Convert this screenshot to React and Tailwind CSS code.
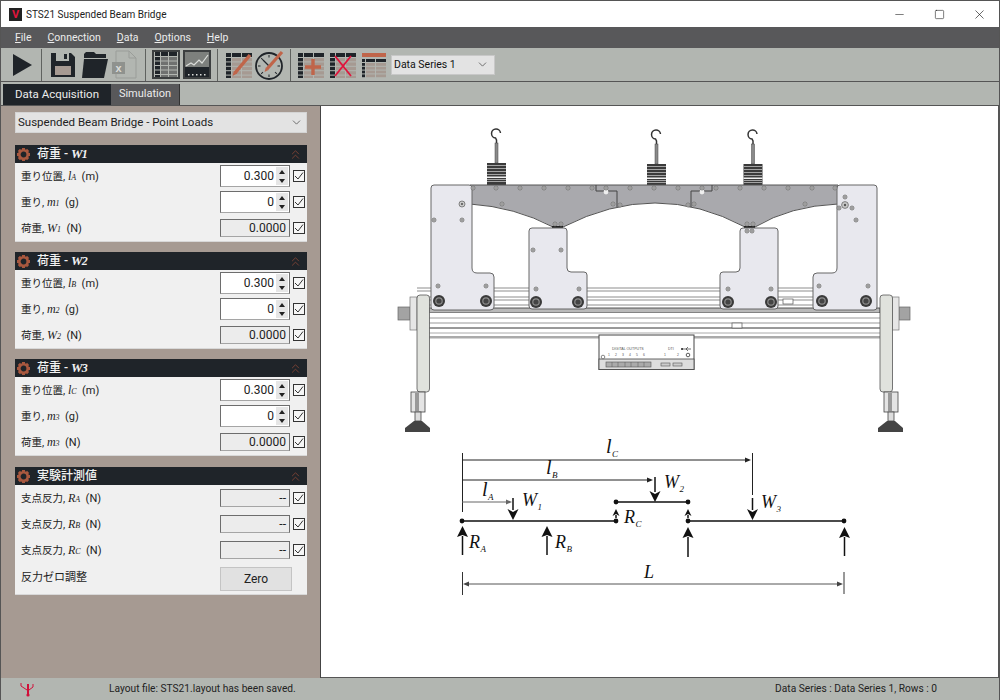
import { Minus, Square, X, ChevronDown, ChevronsUp } from 'lucide-react';

const SERIF = "[font-family:'Liberation_Serif',serif]";

// toolbar bitmap colours
const INK = '#1f2429';
const TAN = '#a69a92';
const RUST = '#c0654a';

function Sep() {
  return <div className="w-px h-[32px] bg-[#5f625f] shrink-0" />;
}

function Play() {
  return (
    <svg width="22" height="24" viewBox="0 0 22 24" className="shrink-0">
      <path d="M1 1 L20 12 L1 23 Z" fill={INK} />
    </svg>
  );
}

function Save() {
  return (
    <svg width="26" height="26" viewBox="0 0 26 26" className="shrink-0">
      <path d="M1 1 H21 L25 5 V25 H1 Z" fill={INK} />
      <rect x="6" y="1" width="13" height="8" fill="#b2b6b1" />
      <rect x="14" y="2" width="3" height="5" fill={INK} />
      <rect x="5" y="14" width="16" height="9" fill={TAN} />
    </svg>
  );
}

function Folder() {
  return (
    <svg width="28" height="28" viewBox="0 0 28 28" className="shrink-0">
      <path d="M3 3 L5 1 H13 L15 3 H25 V7 H3 Z" fill={INK} />
      <path d="M3 8 H27 L23 27 H1 Z" fill={INK} />
    </svg>
  );
}

function Excel() {
  return (
    <svg width="25" height="29" viewBox="0 0 25 29" className="shrink-0">
      <path d="M4 1 H17 L24 8 V28 H4 Z" fill="#b2b6b1" stroke="#9a9d99" />
      <path d="M17 1 V8 H24" fill="none" stroke="#9a9d99" />
      <rect x="0" y="12" width="13" height="12" fill="#8f928e" />
      <text x="6.5" y="22" textAnchor="middle" fontSize="11" fontWeight="700" fill="#d9dbd8" className="[font-family:'Liberation_Sans',sans-serif]">x</text>
    </svg>
  );
}

function SheetCells({ x = 0, y = 0 }) {
  const rows = [0, 1, 2, 3, 4];
  return (
    <g transform={`translate(${x} ${y})`}>
      <rect x="0" y="0" width="5" height="4" fill={INK} />
      <rect x="6" y="0" width="9" height="4" fill={INK} />
      <rect x="16" y="0" width="10" height="4" fill={INK} />
      {rows.map((r) => (
        <g key={r}>
          <rect x="0" y={5 + r * 4.4} width="5" height="3.4" fill={INK} />
          <rect x="6" y={5 + r * 4.4} width="9" height="3.4" fill={TAN} />
          <rect x="16" y={5 + r * 4.4} width="10" height="3.4" fill={TAN} />
        </g>
      ))}
    </g>
  );
}

function BoxedTable() {
  const rows = [5, 9.5, 14, 18.5, 23];
  return (
    <div className="w-[28px] h-[29px] border-2 border-[#3c3f40] bg-[#b2b6b1] flex items-center justify-center shrink-0">
      <svg width="24" height="25" viewBox="0 0 24 25">
        <rect x="1" y="0" width="5" height="4" fill={INK} />
        <rect x="7" y="0" width="7" height="4" fill={INK} />
        <rect x="15" y="0" width="8" height="4" fill={INK} />
        {rows.map((y) => (
          <g key={y}>
            <rect x="1" y={y} width="5" height="3.5" fill={INK} />
            <rect x="7" y={y} width="7" height="3.5" fill="#6f7170" />
            <rect x="15" y={y} width="8" height="3.5" fill="#6f7170" />
          </g>
        ))}
      </svg>
    </div>
  );
}

function BoxedChart() {
  const ticks = [3, 7, 11, 15, 19];
  return (
    <div className="w-[28px] h-[29px] border-2 border-[#3c3f40] bg-[#7d807d] flex items-center justify-center shrink-0">
      <svg width="24" height="25" viewBox="0 0 24 25">
        <path d="M1 14 L6 11 L9 13 L14 8 L17 11 L23 3" fill="none" stroke="#dcdedb" strokeWidth="1.2" />
        <rect x="0" y="15" width="24" height="10" fill={INK} />
        {ticks.map((x) => (
          <rect key={x} x={x} y="22" width="1.5" height="1.5" fill="#dcdedb" />
        ))}
      </svg>
    </div>
  );
}

function EditTable() {
  return (
    <svg width="26" height="26" viewBox="0 0 26 26" className="shrink-0">
      <SheetCells y="1" />
      <path d="M9 21 L24 3" stroke={RUST} strokeWidth="3.5" />
      <path d="M6.5 24 L8 19 L11 21.5 Z" fill={RUST} />
    </svg>
  );
}

function Gauge() {
  const marks = [0, 45, 90, 135, 180, 225, 270, 315];
  return (
    <svg width="30" height="30" viewBox="0 0 30 30" className="shrink-0">
      <circle cx="14" cy="16" r="13" fill="#b2b6b1" stroke={INK} strokeWidth="1.8" />
      {marks.map((a) => (
        <rect key={a} x="13.5" y="5" width="1" height="2.5" fill={INK} transform={`rotate(${a} 14 16)`} />
      ))}
      <path d="M14 16 L8 10" stroke={INK} strokeWidth="1.2" />
      <path d="M12 19 L27 2" stroke={RUST} strokeWidth="3.2" />
      <path d="M9.5 22 L10.8 17.5 L13.5 20 Z" fill={RUST} />
    </svg>
  );
}

function PlusTable() {
  return (
    <svg width="26" height="26" viewBox="0 0 26 26" className="shrink-0">
      <SheetCells y="1" />
      <path d="M7 15 H23 M15 7 V23" stroke={RUST} strokeWidth="3.4" />
    </svg>
  );
}

function CrossTable() {
  return (
    <svg width="26" height="26" viewBox="0 0 26 26" className="shrink-0">
      <SheetCells y="1" />
      <path d="M5 4 L21 24 M21 4 L5 24" stroke="#e0143c" strokeWidth="1.8" />
    </svg>
  );
}

function HeadTable() {
  const rows = [0, 1, 2, 3];
  return (
    <svg width="24" height="26" viewBox="0 0 24 26" className="shrink-0">
      <rect x="0" y="1" width="24" height="4" fill={RUST} />
      <g transform="translate(0 7)">
        <rect x="0" y="0" width="3" height="3" fill={INK} />
        <rect x="4" y="0" width="9" height="3" fill={INK} />
        <rect x="14" y="0" width="10" height="3" fill={INK} />
        {rows.map((r) => (
          <g key={r}>
            <rect x="0" y={4 + r * 3.8} width="3" height="2.8" fill={INK} />
            <rect x="4" y={4 + r * 3.8} width="9" height="2.8" fill={TAN} />
            <rect x="14" y={4 + r * 3.8} width="10" height="2.8" fill={TAN} />
          </g>
        ))}
      </g>
    </svg>
  );
}

function Gear() {
  const teeth = [0, 45, 90, 135, 180, 225, 270, 315];
  return (
    <svg width="13" height="13" viewBox="0 0 13 13" className="shrink-0">
      {teeth.map((a) => (
        <rect key={a} x="5" y="0" width="3" height="3" fill="#a8583f" transform={`rotate(${a} 6.5 6.5)`} />
      ))}
      <circle cx="6.5" cy="6.5" r="4.2" fill="none" stroke="#a8583f" strokeWidth="2.6" />
    </svg>
  );
}

function Check() {
  return (
    <div className="w-[12px] h-[12px] border border-[#333] bg-[#f6f6f6] flex items-center justify-center shrink-0">
      <svg width="10" height="10" viewBox="0 0 10 10">
        <path d="M1 5 L4 8 L9 1.5" fill="none" stroke="#333" strokeWidth="1" />
      </svg>
    </div>
  );
}

function Sym({ s, sub, bold }) {
  return (
    <span className={`${SERIF} italic ${bold ? 'font-bold text-[13px]' : 'text-[12px]'}`}>
      {s}
      <span className={bold ? 'text-[12px] ml-[-1px]' : 'text-[8px]'}>{sub}</span>
    </span>
  );
}

function Spin({ value }) {
  return (
    <div className="w-[70px] h-[22px] border border-[#6d6d6d] border-b-[#a5a5a5] bg-white flex items-center justify-end shrink-0">
      <span className="text-[12px] text-[#222] mr-[2px]">{value}</span>
      <div className="w-[12px] h-[18px] mr-[1px] bg-[#e6e6e6] flex flex-col items-center justify-around">
        <div className="w-0 h-0 border-x-[3px] border-x-transparent border-b-[4px] border-b-[#222]" />
        <div className="w-0 h-0 border-x-[3px] border-x-transparent border-t-[4px] border-t-[#222]" />
      </div>
    </div>
  );
}

function ReadOut({ value }) {
  return (
    <div className="w-[70px] h-[18px] border border-[#6d6d6d] border-b-[#a5a5a5] bg-[#ececec] flex items-center justify-end pr-[3px] shrink-0">
      <span className="text-[12px] text-[#222]">{value}</span>
    </div>
  );
}

function Row({ name, sym, sub, unit, spin, read }) {
  return (
    <div className="h-[26px] flex items-center pl-[6px] pr-[2px]">
      <div className="flex-1 text-[10.5px] text-[#222] whitespace-pre">
        {name}
        <span className="text-[11px]">
          , <Sym s={sym} sub={sub} />
          {'  '}({unit})
        </span>
      </div>
      {spin && <Spin value={spin} />}
      {read && <ReadOut value={read} />}
      <div className="w-[15px] flex justify-end">
        <Check />
      </div>
    </div>
  );
}

function Section({ title, sym, sub, gap, children }) {
  return (
    <div className={`${gap} bg-[#f0f0f0] border-b border-b-[#d8d8d8]`}>
      <div className="h-[18px] bg-[#1f2429] flex items-center pl-[2px] pr-[4px]">
        <Gear />
        <div className="ml-[7px] flex-1 text-[12px] font-medium text-[#f2f2f2] whitespace-pre">
          {title}
          {sym && (
            <>
              {' - '}
              <Sym s={sym} sub={sub} bold />
            </>
          )}
        </div>
        <ChevronsUp size={15} color="#8a4636" strokeWidth={1.3} />
      </div>
      {children}
    </div>
  );
}

function LoadSection({ n, pos, wRow, gap }) {
  return (
    <Section title="荷重" sym="W" sub={n} gap={gap}>
      <Row name="重り位置" sym="l" sub={pos} unit="m" spin="0.300" />
      <Row name="重り" sym="m" sub={n} unit="g" spin="0" />
      <Row name="荷重" sym={wRow} sub={n} unit="N" read="0.0000" />
    </Section>
  );
}

function Screw({ x, y, r = 2 }) {
  return (
    <g>
      <circle cx={x} cy={y} r={r} fill="#c9c9c9" stroke="#6c6c6c" strokeWidth="0.8" />
      <circle cx={x} cy={y} r={r * 0.35} fill="#555" />
    </g>
  );
}

function Pivot({ x, y }) {
  return (
    <g>
      <circle cx={x} cy={y} r="6" fill="#3a3a3a" />
      <circle cx={x} cy={y} r="3.8" fill="#8d8d8d" />
      <circle cx={x} cy={y} r="2.6" fill="#444" />
    </g>
  );
}

function Weight({ x, top }) {
  const bands = [2, 5, 8, 11, 16, 18];
  return (
    <g>
      <path d={`M${x + 4} ${top - 30} A4.5 4.5 0 1 0 ${x - 1} ${top - 25} L${x} ${top - 23} V${top - 20}`} fill="none" stroke="#333" strokeWidth="1.5" />
      <rect x={x - 1.5} y={top - 20} width="3" height="20" fill="#8a8a8a" stroke="#444" strokeWidth="0.5" />
      <rect x={x - 9.5} y={top} width="19" height={185 - top} fill="#3a3a3a" />
      {bands.map((b) => (
        <rect key={b} x={x - 9.5} y={top + b} width="19" height="1" fill="#a5a5a5" />
      ))}
      <rect x={x - 9.5} y={top + 13.5} width="19" height="1.5" fill="#eee" />
    </g>
  );
}

function Foot({ x }) {
  return (
    <g>
      <rect x={x - 7} y="392" width="14" height="20" fill="#e4e4e4" stroke="#444" strokeWidth="0.8" />
      <rect x={x - 3} y="393" width="4" height="18" fill="#999" />
      <rect x={x - 3} y="412" width="6" height="9" fill="#ddd" stroke="#444" strokeWidth="0.8" />
      <path d={`M${x - 4} 421 H${x + 4} L${x + 12} 428 V432 H${x - 13} V428 Z`} fill="#444" />
    </g>
  );
}

function Plate({ d }) {
  return <path d={d} fill="#e8e8ee" stroke="#666" strokeWidth="1" />;
}

function Bridge() {
  const railYs = [288, 291, 297, 300, 305];
  const topScrews = [473, 496, 520, 544, 568, 592, 606, 630, 654, 678, 702, 716, 740, 764, 788, 812, 835];
  const screws = [
    [434, 220], [462, 220], [502, 204], [613, 204], [620, 205], [555, 224], [561, 224],
    [533, 250], [561, 250], [438, 286], [486, 286], [536, 289], [579, 289], [688, 205],
    [694, 204], [805, 204], [747, 224], [753, 224], [747, 231], [752, 231], [728, 289],
    [771, 289], [845, 197], [839, 208], [852, 208], [856, 220], [819, 286], [868, 286],
  ];
  const pivots = [
    [439, 301], [486, 301], [536, 302], [578, 302], [728, 302], [771, 302], [822, 301], [866, 301],
  ];
  const outs = [1, 2, 3, 4, 5, 6];
  return (
    <g>
      <Weight x={496.5} top={163} />
      <Weight x={656.5} top={164} />
      <Weight x={753} top={164} />

      {/* rails behind the plates */}
      <rect x="417" y="288" width="309" height="20" fill="#fff" />
      {railYs.map((y) => (
        <path key={y} d={`M417 ${y} H868`} stroke="#8d8d8d" strokeWidth="1" />
      ))}
      <rect x="429" y="308" width="451" height="5" fill="#b9b9b9" stroke="#333" strokeWidth="0.8" />
      <rect x="429" y="313" width="451" height="25" fill="#fff" />
      <path d="M429 318 H880 M429 323 H880" stroke="#999" strokeWidth="1" />
      <path d="M429 328 H880" stroke="#333" strokeWidth="1" />
      <path d="M429 333 H880" stroke="#aaa" strokeWidth="1" />
      <rect x="429" y="336" width="451" height="2.5" fill="#aaa" />
      <rect x="732" y="323" width="10" height="5" fill="#fff" stroke="#555" strokeWidth="0.7" />
      <rect x="783" y="299" width="10" height="5" fill="#fff" stroke="#555" strokeWidth="0.7" />

      {/* grey span */}
      <path
        d="M470 185 H838 V204 Q790 206 755 227 H745 Q700 203 655 203 Q610 203 563 227 H553 Q515 207 470 204 Z"
        fill="#a9a9ad"
        stroke="#555"
        strokeWidth="1"
      />
      <path d="M596 185 V191 H617 V207 M712 185 V191 H691 V207" fill="none" stroke="#444" strokeWidth="1" />
      <circle cx="606" cy="192" r="2.4" fill="#eee" />
      <circle cx="702" cy="192" r="2.4" fill="#eee" />
      <rect x="552" y="226" width="11" height="2.5" fill="#222" />
      <rect x="744" y="226" width="11" height="2.5" fill="#222" />

      {/* plates */}
      <Plate d="M434 185 H469 Q472 185 472 188 V268 Q472 273 477 273 H490 Q494 273 494 277 V307 Q494 310 490 310 H434 Q431 310 431 307 V188 Q431 185 434 185 Z" />
      <Plate d="M532 228 H564 Q567 228 567 231 V268 Q567 272 571 272 H584 Q587 272 587 275 V306 Q587 309 584 309 H532 Q529 309 529 306 V231 Q529 228 532 228 Z" />
      <Plate d="M743 228 H775 Q778 228 778 231 V306 Q778 309 775 309 H723 Q720 309 720 306 V275 Q720 272 723 272 H736 Q740 272 740 268 V231 Q740 228 743 228 Z" />
      <Plate d="M840 185 H874 Q877 185 877 188 V307 Q877 310 874 310 H816 Q813 310 813 307 V277 Q813 273 817 273 H832 Q837 273 837 268 V188 Q837 185 840 185 Z" />

      {topScrews.map((x) => (
        <Screw key={x} x={x} y={188} />
      ))}
      {screws.map(([x, y]) => (
        <Screw key={`${x}-${y}`} x={x} y={y} />
      ))}
      <Screw x={462} y={204} r={3} />
      <Screw x={845} y={205} r={3.4} />
      {pivots.map(([x, y]) => (
        <Pivot key={x} x={x} y={y} />
      ))}

      {/* end posts and bolts */}
      <rect x="398" y="307" width="12" height="13" fill="#a3a3a3" stroke="#666" strokeWidth="0.7" />
      <rect x="410" y="297" width="7" height="33" fill="#e6e6e6" stroke="#777" strokeWidth="0.7" />
      <rect x="417" y="295" width="12.5" height="97" rx="3" fill="#e0e2dd" stroke="#555" strokeWidth="0.8" />
      <rect x="899" y="307" width="11" height="13" fill="#a3a3a3" stroke="#666" strokeWidth="0.7" />
      <rect x="892" y="297" width="7" height="33" fill="#e6e6e6" stroke="#777" strokeWidth="0.7" />
      <rect x="880" y="295" width="12.5" height="97" rx="3" fill="#e0e2dd" stroke="#555" strokeWidth="0.8" />
      <Foot x={418} />
      <Foot x={891} />

      {/* digital output box */}
      <rect x="599" y="335" width="95" height="34.5" fill="#fff" stroke="#444" strokeWidth="1" />
      <rect x="599" y="359" width="95" height="10.5" fill="#ddd" stroke="#444" strokeWidth="0.8" />
      <text x="612" y="350" fontSize="3.6" fill="#555" className="[font-family:'Liberation_Sans',sans-serif]">DIGITAL OUTPUTS</text>
      <text x="668" y="350" fontSize="3.6" fill="#555" className="[font-family:'Liberation_Sans',sans-serif]">DTI</text>
      {outs.map((n) => (
        <text key={n} x={601 + n * 7} y="355.5" fontSize="3.4" fill="#555" className="[font-family:'Liberation_Sans',sans-serif]">{n}</text>
      ))}
      <text x="664" y="355.5" fontSize="3.4" fill="#555" className="[font-family:'Liberation_Sans',sans-serif]">1</text>
      <text x="677" y="355.5" fontSize="3.4" fill="#555" className="[font-family:'Liberation_Sans',sans-serif]">2</text>
      <circle cx="603" cy="357" r="1.8" fill="#fff" stroke="#555" strokeWidth="0.7" />
      <circle cx="688" cy="355" r="1.8" fill="#fff" stroke="#333" strokeWidth="0.8" />
      <path d="M682 349 H691 M686 349 L688 347 M686 349 L688 351" stroke="#333" strokeWidth="0.7" fill="none" />
      <circle cx="682" cy="349" r="1" fill="#222" />
      <rect x="606" y="362" width="45" height="5" fill="#aaa" stroke="#555" strokeWidth="0.6" />
      <path d="M612 362 V367 M618 362 V367 M625 362 V367 M631 362 V367 M638 362 V367 M644 362 V367" stroke="#555" strokeWidth="0.5" />
      <rect x="661" y="363" width="9" height="3" fill="#ccc" stroke="#555" strokeWidth="0.6" />
      <rect x="673" y="363" width="9" height="3" fill="#ccc" stroke="#555" strokeWidth="0.6" />
    </g>
  );
}

function Down({ x, from, to }) {
  return (
    <g>
      <path d={`M${x} ${from} V${to - 10}`} stroke="#111" strokeWidth="1.5" />
      <path d={`M${x} ${to} L${x - 5.5} ${to - 11} L${x} ${to - 8} L${x + 5.5} ${to - 11} Z`} fill="#111" />
    </g>
  );
}

function Up({ x, from, to, small }) {
  const w = small ? 3.5 : 5.5;
  const h = small ? 7 : 11;
  return (
    <g>
      <path d={`M${x} ${from} V${to + h - 1}`} stroke="#111" strokeWidth="1.5" />
      <path d={`M${x} ${to} L${x - w} ${to + h} L${x} ${to + h - 2} L${x + w} ${to + h} Z`} fill="#111" />
    </g>
  );
}

function HArrow({ x1, x2, y, color = '#222' }) {
  return (
    <g>
      <path d={`M${x1} ${y} H${x2 - 2}`} stroke={color} strokeWidth="1" />
      <path d={`M${x2} ${y} L${x2 - 6} ${y - 2.5} V${y + 2.5} Z`} fill={color} />
    </g>
  );
}

function Letter({ x, y, s, sub, size = 18 }) {
  return (
    <text x={x} y={y} fontSize={size} fill="#111" fontStyle="italic" className={SERIF}>
      {s}
      <tspan fontSize="9" dy="4" dx="0.5">{sub}</tspan>
    </text>
  );
}

function Diagram() {
  const dots = [[462, 521], [616, 521], [616, 502], [688, 502], [688, 521], [844, 521]];
  return (
    <g>
      <path d="M462.5 453 V512" stroke="#222" strokeWidth="1" />
      <HArrow x1={462} x2={751} y={460} />
      <HArrow x1={462} x2={653} y={480} />
      <HArrow x1={462} x2={512} y={502} color="#666" />
      <path d="M752.5 453 V495" stroke="#222" strokeWidth="1" />
      <Down x={752.5} from={498} to={520} />
      <Down x={655} from={477} to={502} />
      <Down x={513} from={498} to={520} />

      <path d="M462 521 H616 M616 502 H688 M688 521 H844" stroke="#111" strokeWidth="1.6" />
      {dots.map(([x, y]) => (
        <circle key={`${x}-${y}`} cx={x} cy={y} r="2.4" fill="#111" />
      ))}
      <Up x={462.5} from={555} to={526} />
      <Up x={547} from={555} to={526} />
      <Up x={688} from={557} to={527} />
      <Up x={844.5} from={556} to={527} />
      <Up x={616} from={518} to={509} small />
      <Up x={688} from={518} to={509} small />

      <path d="M462.5 572 V595 M844 572 V594" stroke="#333" strokeWidth="1" />
      <path d="M466 584 H840" stroke="#555" strokeWidth="1" />
      <path d="M463 584 L469 581.5 V586.5 Z M843 584 L837 581.5 V586.5 Z" fill="#444" />

      <Letter x={606} y={453} s="l" sub="C" size={20} />
      <Letter x={546} y={474} s="l" sub="B" size={20} />
      <Letter x={482} y={496} s="l" sub="A" size={20} />
      <Letter x={522} y={506} s="W" sub="1" />
      <Letter x={664} y={488} s="W" sub="2" />
      <Letter x={761} y={508} s="W" sub="3" />
      <Letter x={469} y={548} s="R" sub="A" />
      <Letter x={555} y={548} s="R" sub="B" />
      <Letter x={624} y={523} s="R" sub="C" />
      <Letter x={644} y={578} s="L" />
    </g>
  );
}

function UsbIcon() {
  return (
    <svg width="16" height="16" viewBox="0 0 16 16" className="shrink-0">
      <path d="M9 3 V15" stroke="#d0103a" strokeWidth="2" />
      <path d="M2 2 V5 L8 9 M14 3 V6 L10 9" fill="none" stroke="#d0103a" strokeWidth="1" />
      <circle cx="9" cy="14" r="1.6" fill="#d0103a" />
    </svg>
  );
}

export default function App() {
  return (
    <div className="w-[1000px] h-[700px] flex flex-col overflow-hidden border border-[#555] border-b-0 text-[#222] [font-family:'Roboto','Noto_Sans_CJK_JP',sans-serif]">
      <div className="h-[26px] bg-white flex items-center shrink-0">
        <div className="ml-[8px] w-[13px] h-[13px] bg-[#222] flex items-center justify-center">
          <span className="text-[11px] font-bold leading-none text-[#e0143c]">V</span>
        </div>
        <span className="ml-[4px] text-[10px] text-[#222]">STS21 Suspended Beam Bridge</span>
        <div className="ml-auto flex items-center">
          <div className="w-[40px] flex justify-center"><Minus size={13} strokeWidth={1} color="#111" /></div>
          <div className="w-[40px] flex justify-center"><Square size={11} strokeWidth={1.2} color="#111" /></div>
          <div className="w-[40px] flex justify-center"><X size={15} strokeWidth={1} color="#111" /></div>
        </div>
      </div>

      <div className="h-[21px] bg-[#58585a] flex items-center pl-[14px] gap-[16px] text-[10.5px] text-[#ececec] shrink-0">
        <span><u>F</u>ile</span>
        <span><u>C</u>onnection</span>
        <span><u>D</u>ata</span>
        <span><u>O</u>ptions</span>
        <span><u>H</u>elp</span>
      </div>

      <div className="h-[34px] bg-[#b2b6b1] border-b border-b-[#555] flex items-center pl-[11px] shrink-0">
        <Play />
        <div className="ml-[7px]"><Sep /></div>
        <div className="ml-[8px]"><Save /></div>
        <div className="ml-[5px]"><Folder /></div>
        <div className="ml-[3px]"><Excel /></div>
        <div className="ml-[8px]"><Sep /></div>
        <div className="ml-[6px]"><BoxedTable /></div>
        <div className="ml-[3px]"><BoxedChart /></div>
        <div className="ml-[6px]"><Sep /></div>
        <div className="ml-[8px]"><EditTable /></div>
        <div className="ml-[3px]"><Gauge /></div>
        <div className="ml-[5px]"><Sep /></div>
        <div className="ml-[7px]"><PlusTable /></div>
        <div className="ml-[6px]"><CrossTable /></div>
        <div className="ml-[6px]"><HeadTable /></div>
        <div className="ml-[5px] w-[104px] h-[20px] bg-[#e3e3e3] border border-[#c8c8c8] flex items-center justify-between pl-[2px] pr-[5px]">
          <span className="text-[10.5px] text-[#111]">Data Series 1</span>
          <ChevronDown size={13} color="#555" strokeWidth={1.5} />
        </div>
      </div>

      <div className="h-[24px] bg-[#b2b6b1] border-b border-b-[#555] flex items-end pl-[2px] shrink-0">
        <div className="w-[108px] h-[21px] bg-[#1f2429] text-[11.5px] text-[#ececec] flex items-center justify-center">Data Acquisition</div>
        <div className="w-[69px] h-[21px] bg-[#58585a] border-r border-r-[#333] text-[11px] text-[#ececec] flex items-center justify-center">Simulation</div>
      </div>

      <div className="flex-1 flex min-h-0">
        <div className="w-[320px] bg-[#a69a92] border-r border-r-[#444] pl-[14px] pr-[13px] pt-[6px] shrink-0">
          <div className="h-[21px] bg-[#e3e3e3] border border-[#d4d4d4] flex items-center justify-between pl-[2px] pr-[3px]">
            <span className="text-[11.5px] text-[#222]">Suspended Beam Bridge - Point Loads</span>
            <ChevronDown size={13} color="#555" strokeWidth={1.5} />
          </div>
          <LoadSection n="1" pos="A" wRow="W" gap="mt-[12px]" />
          <LoadSection n="2" pos="B" wRow="W" gap="mt-[10px]" />
          <LoadSection n="3" pos="C" wRow="m" gap="mt-[10px]" />
          <Section title="実験計測値" gap="mt-[11px]">
            <Row name="支点反力" sym="R" sub="A" unit="N" read="--" />
            <Row name="支点反力" sym="R" sub="B" unit="N" read="--" />
            <Row name="支点反力" sym="R" sub="C" unit="N" read="--" />
            <div className="h-[31px] flex items-center pl-[6px]">
              <div className="flex-1 text-[11px] text-[#222]">反力ゼロ調整</div>
              <div className="w-[72px] h-[24px] mr-[15px] bg-[#e1e1e1] border border-[#c4c4c4] flex items-center justify-center text-[12px] text-[#222]">Zero</div>
            </div>
          </Section>
        </div>

        <div className="flex-1 bg-white border-r border-r-[#555] border-b border-b-[#555] min-w-0">
          <svg width="677" height="571" viewBox="321 106 677 571" className="block">
            <Bridge />
            <Diagram />
          </svg>
        </div>
      </div>

      <div className="h-[22px] bg-[#b2b6b1] flex items-center pl-[18px] pr-[62px] text-[10.2px] text-[#222] shrink-0">
        <UsbIcon />
        <span className="ml-[74px]">Layout file: STS21.layout has been saved.</span>
        <span className="ml-auto">Data Series : Data Series 1,  Rows : 0</span>
      </div>
    </div>
  );
}
